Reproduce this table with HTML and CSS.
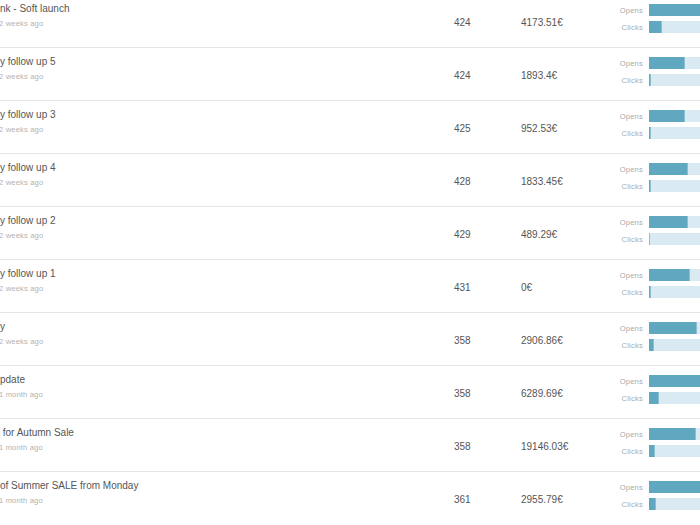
FILE: index.html
```html
<html>

<head>
    <meta charset="utf-8" />
    <link rel="stylesheet" href="styles.css">
</head>

<body>
    <div class="campaigns">
        <div class="row">
            <div class="name">
                <div class="title">nk - Soft launch</div>
                <div class="sent">2 weeks ago</div>
            </div>
            <div class="count">424</div>
            <div class="revenue">4173.51€</div>
            <div class="stats">
                <div class="stat"><span class="label">Opens</span><div class="bar"><div class="fill" style="width: 62%"></div></div></div>
                <div class="stat"><span class="label">Clicks</span><div class="bar"><div class="fill" style="width: 13%"></div></div></div>
            </div>
        </div>
        <div class="row">
            <div class="name">
                <div class="title">y follow up 5</div>
                <div class="sent">2 weeks ago</div>
            </div>
            <div class="count">424</div>
            <div class="revenue">1893.4€</div>
            <div class="stats">
                <div class="stat"><span class="label">Opens</span><div class="bar"><div class="fill" style="width: 36%"></div></div></div>
                <div class="stat"><span class="label">Clicks</span><div class="bar"><div class="fill" style="width: 2%"></div></div></div>
            </div>
        </div>
        <div class="row">
            <div class="name">
                <div class="title">y follow up 3</div>
                <div class="sent">2 weeks ago</div>
            </div>
            <div class="count">425</div>
            <div class="revenue">952.53€</div>
            <div class="stats">
                <div class="stat"><span class="label">Opens</span><div class="bar"><div class="fill" style="width: 36%"></div></div></div>
                <div class="stat"><span class="label">Clicks</span><div class="bar"><div class="fill" style="width: 2%"></div></div></div>
            </div>
        </div>
        <div class="row">
            <div class="name">
                <div class="title">y follow up 4</div>
                <div class="sent">2 weeks ago</div>
            </div>
            <div class="count">428</div>
            <div class="revenue">1833.45€</div>
            <div class="stats">
                <div class="stat"><span class="label">Opens</span><div class="bar"><div class="fill" style="width: 39%"></div></div></div>
                <div class="stat"><span class="label">Clicks</span><div class="bar"><div class="fill" style="width: 2%"></div></div></div>
            </div>
        </div>
        <div class="row">
            <div class="name">
                <div class="title">y follow up 2</div>
                <div class="sent">2 weeks ago</div>
            </div>
            <div class="count">429</div>
            <div class="revenue">489.29€</div>
            <div class="stats">
                <div class="stat"><span class="label">Opens</span><div class="bar"><div class="fill" style="width: 39%"></div></div></div>
                <div class="stat"><span class="label">Clicks</span><div class="bar"><div class="fill" style="width: 1%"></div></div></div>
            </div>
        </div>
        <div class="row">
            <div class="name">
                <div class="title">y follow up 1</div>
                <div class="sent">2 weeks ago</div>
            </div>
            <div class="count">431</div>
            <div class="revenue">0€</div>
            <div class="stats">
                <div class="stat"><span class="label">Opens</span><div class="bar"><div class="fill" style="width: 41%"></div></div></div>
                <div class="stat"><span class="label">Clicks</span><div class="bar"><div class="fill" style="width: 2%"></div></div></div>
            </div>
        </div>
        <div class="row">
            <div class="name">
                <div class="title">y</div>
                <div class="sent">2 weeks ago</div>
            </div>
            <div class="count">358</div>
            <div class="revenue">2906.86€</div>
            <div class="stats">
                <div class="stat"><span class="label">Opens</span><div class="bar"><div class="fill" style="width: 48%"></div></div></div>
                <div class="stat"><span class="label">Clicks</span><div class="bar"><div class="fill" style="width: 5%"></div></div></div>
            </div>
        </div>
        <div class="row">
            <div class="name">
                <div class="title">pdate</div>
                <div class="sent">1 month ago</div>
            </div>
            <div class="count">358</div>
            <div class="revenue">6289.69€</div>
            <div class="stats">
                <div class="stat"><span class="label">Opens</span><div class="bar"><div class="fill" style="width: 55%"></div></div></div>
                <div class="stat"><span class="label">Clicks</span><div class="bar"><div class="fill" style="width: 10%"></div></div></div>
            </div>
        </div>
        <div class="row">
            <div class="name">
                <div class="title"> for Autumn Sale</div>
                <div class="sent">1 month ago</div>
            </div>
            <div class="count">358</div>
            <div class="revenue">19146.03€</div>
            <div class="stats">
                <div class="stat"><span class="label">Opens</span><div class="bar"><div class="fill" style="width: 47%"></div></div></div>
                <div class="stat"><span class="label">Clicks</span><div class="bar"><div class="fill" style="width: 6%"></div></div></div>
            </div>
        </div>
        <div class="row">
            <div class="name">
                <div class="title">of Summer SALE from Monday</div>
                <div class="sent">1 month ago</div>
            </div>
            <div class="count">361</div>
            <div class="revenue">2955.79€</div>
            <div class="stats">
                <div class="stat"><span class="label">Opens</span><div class="bar"><div class="fill" style="width: 56%"></div></div></div>
                <div class="stat"><span class="label">Clicks</span><div class="bar"><div class="fill" style="width: 7%"></div></div></div>
            </div>
        </div>
    </div>
</body>

</html>
```

FILE: styles.css
```css
body {
    margin: 0;
    overflow: hidden;
    background: #fff;
    font-family: "Liberation Sans", Arial, sans-serif;
}

.campaigns {
    width: 760px;
    margin-top: -6px;
}

.row {
    display: flex;
    align-items: center;
    height: 52px;
    border-top: 1px solid #e6e6e6;
}

.name {
    width: 454px;
    align-self: flex-start;
    padding-top: 8px;
}

.title {
    white-space: pre;
    font-size: 10px;
    line-height: 12px;
    color: #555;
}

.sent {
    margin-top: 3px;
    margin-left: -1px;
    font-size: 7.6px;
    line-height: 12px;
    letter-spacing: 0.15px;
    color: #b3b3b3;
}

.count {
    width: 67px;
    padding-top: 2px;
    font-size: 10px;
    color: #555;
}

.revenue {
    width: 89px;
    padding-top: 2px;
    font-size: 10px;
    color: #555;
}

.stats {
    align-self: flex-start;
    padding-top: 9px;
    display: flex;
    flex-direction: column;
    gap: 5px;
}

.stat {
    display: flex;
    align-items: center;
    height: 12px;
}

.label {
    width: 33px;
    margin-right: 6px;
    text-align: right;
    font-size: 7.6px;
    letter-spacing: 0.2px;
    color: #aaa;
}

.bar {
    width: 100px;
    height: 12px;
    background: #d9eaf2;
}

.fill {
    height: 100%;
    background: #5fa8bf;
    border-right: 1px solid #8cc0d1;
    box-sizing: border-box;
}
```
